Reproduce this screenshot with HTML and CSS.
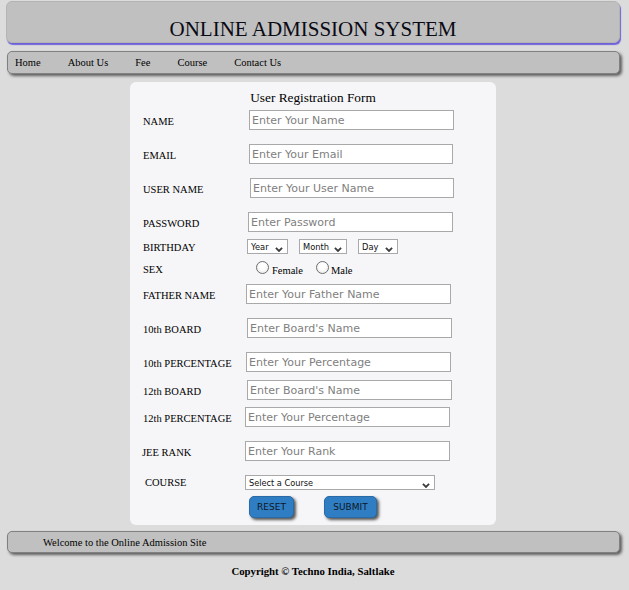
FILE: index.html
```html
<!DOCTYPE html>
<html lang="en">
<head>
<meta charset="utf-8">
<title>Online Admission System</title>
<link rel="stylesheet" href="styles.css">
</head>
<body>
<div class="page">
  <header class="masthead"><h1 class="masthead-title">ONLINE ADMISSION SYSTEM</h1></header>
  <nav class="menu">
    <a href="#">Home</a>
    <a href="#">About Us</a>
    <a href="#">Fee</a>
    <a href="#">Course</a>
    <a href="#">Contact Us</a>
  </nav>
  <main class="card">
    <form class="reg">
      <div class="form-title">User Registration Form</div>

      <div class="row">
        <label class="lbl">NAME</label>
        <input class="field off4" type="text" placeholder="Enter Your Name">
      </div>
      <div class="row gap-14">
        <label class="lbl">EMAIL</label>
        <input class="field off4 w204" type="text" placeholder="Enter Your Email">
      </div>
      <div class="row gap-14">
        <label class="lbl">USER NAME</label>
        <input class="field off5 w204" type="text" placeholder="Enter Your User Name">
      </div>
      <div class="row gap-14">
        <label class="lbl">PASSWORD</label>
        <input class="field off3" type="password" placeholder="Enter Password">
      </div>

      <div class="row row-sm gap-7">
        <label class="lbl">BIRTHDAY</label>
        <div class="dob off2">
          <span class="select-wrap sw-year">
            <select class="sel"><option>Year</option></select>
            <svg class="chev" width="8" height="5" viewBox="0 0 8 5"><path d="M0.9 0.9 L4 4 L7.1 0.9" fill="none" stroke="#3c3c3c" stroke-width="1.8"/></svg>
          </span>
          <span class="select-wrap sw-month">
            <select class="sel"><option>Month</option></select>
            <svg class="chev" width="8" height="5" viewBox="0 0 8 5"><path d="M0.9 0.9 L4 4 L7.1 0.9" fill="none" stroke="#3c3c3c" stroke-width="1.8"/></svg>
          </span>
          <span class="select-wrap sw-day">
            <select class="sel"><option>Day</option></select>
            <svg class="chev" width="8" height="5" viewBox="0 0 8 5"><path d="M0.9 0.9 L4 4 L7.1 0.9" fill="none" stroke="#3c3c3c" stroke-width="1.8"/></svg>
          </span>
        </div>
      </div>

      <div class="row row-sex gap-7">
        <label class="lbl">SEX</label>
        <div class="radios">
          <input class="radio" type="radio" name="sex" id="female"><label class="rtext" for="female">Female</label>
          <input class="radio r2" type="radio" name="sex" id="male"><label class="rtext rt2" for="male">Male</label>
        </div>
      </div>

      <div class="row gap-9">
        <label class="lbl">FATHER NAME</label>
        <input class="field off1" type="text" placeholder="Enter Your Father Name">
      </div>
      <div class="row gap-14">
        <label class="lbl">10th BOARD</label>
        <input class="field off2" type="text" placeholder="Enter Board's Name">
      </div>
      <div class="row gap-14">
        <label class="lbl">10th PERCENTAGE</label>
        <input class="field off1" type="text" placeholder="Enter Your Percentage">
      </div>
      <div class="row gap-8">
        <label class="lbl">12th BOARD</label>
        <input class="field off2" type="text" placeholder="Enter Board's Name">
      </div>
      <div class="row gap-7">
        <label class="lbl">12th PERCENTAGE</label>
        <input class="field" type="text" placeholder="Enter Your Percentage">
      </div>
      <div class="row gap-14">
        <label class="lbl lbl-l">JEE RANK</label>
        <input class="field" type="text" placeholder="Enter Your Rank">
      </div>

      <div class="row row-sm gap-14">
        <label class="lbl lbl-r">COURSE</label>
        <span class="select-wrap sw-course">
          <select class="sel sel-course"><option>Select a Course</option></select>
          <svg class="chev" width="8" height="5" viewBox="0 0 8 5"><path d="M0.9 0.9 L4 4 L7.1 0.9" fill="none" stroke="#3c3c3c" stroke-width="1.8"/></svg>
        </span>
      </div>

      <div class="actions">
        <button class="btn btn-reset" type="reset">RESET</button>
        <button class="btn btn-submit" type="submit">SUBMIT</button>
      </div>
    </form>
  </main>
  <div class="ticker">Welcome to the Online Admission Site</div>
  <p class="copy">Copyright © Techno India, Saltlake</p>
</div>
</body>
</html>
```

FILE: styles.css
```css
* { box-sizing: border-box; }

html, body {
  margin: 0;
  padding: 0;
  background: #dcdcdc;
}

body {
  font-family: "Liberation Serif", "Times New Roman", serif;
  color: #000;
}

.page {
  display: flex;
  flex-direction: column;
  padding: 1px 9px 0 6px;
  width: 629px;
  min-height: 590px;
}

.masthead {
  height: 42px;
  background: #c0c0c0;
  border: 1px solid #b4b4b4;
  border-radius: 6px;
  box-shadow: 1px 2px 1px #6f62d8;
  padding-top: 15px;
  text-align: center;
}

.masthead-title {
  margin: 0;
  font-weight: normal;
  font-size: 21px;
  line-height: 24px;
  color: #0a0a14;
}

.menu {
  margin-top: 8px;
  margin-left: 1px;
  height: 23px;
  background: #c0c0c0;
  border: 1px solid #808080;
  border-radius: 5px;
  box-shadow: 2px 2px 3px #5e5e5e;
  display: flex;
  align-items: center;
  gap: 27px;
  padding-left: 7px;
}

.menu a {
  color: #000;
  text-decoration: none;
  font-size: 10.5px;
}

.card {
  margin: 8px auto 0;
  width: 366px;
  background: #f6f6f8;
  border-radius: 6px;
  padding: 8px 13px 7px;
}

.reg {
  display: flex;
  flex-direction: column;
  margin: 0;
}

.form-title {
  text-align: center;
  font-size: 13.3px;
  line-height: 16px;
  margin-bottom: 4px;
}

.row {
  display: flex;
  align-items: center;
  height: 20px;
}

.row-sm { height: 15px; }
.row-sex { height: 14px; }

.gap-14 { margin-top: 14px; }
.gap-9 { margin-top: 9px; }
.gap-8 { margin-top: 8px; }
.gap-7 { margin-top: 7px; }

.lbl {
  width: 102px;
  flex: none;
  font-size: 10.5px;
  padding-top: 2px;
  white-space: nowrap;
}

.lbl-l { margin-left: -1px; width: 103px; }
.lbl-r { padding-left: 2px; padding-top: 0; }

.field {
  width: 205px;
  height: 20px;
  border: 1px solid #a9a9a9;
  background: #fff;
  padding: 0 2px;
  margin: 0;
  font-family: "DejaVu Sans", sans-serif;
  font-size: 11px;
  color: #333;
  outline: none;
}

.field::placeholder { color: #808080; }

.w204 { width: 204px; }
.off1 { margin-left: 1px; }
.off2 { margin-left: 2px; }
.off3 { margin-left: 3px; }
.off4 { margin-left: 4px; }
.off5 { margin-left: 5px; }

.dob {
  display: flex;
  gap: 11px;
  height: 15px;
}

.select-wrap {
  position: relative;
  display: block;
  height: 15px;
}

.sw-year { width: 41px; }
.sw-month { width: 48px; }
.sw-day { width: 40px; }
.sw-course { width: 190px; }

.sel {
  appearance: none;
  -webkit-appearance: none;
  display: block;
  width: 100%;
  height: 15px;
  margin: 0;
  border: 1px solid #a9a9a9;
  border-radius: 0;
  background: #fff;
  padding: 0 0 0 3px;
  font-family: "DejaVu Sans", sans-serif;
  font-size: 8.3px;
  color: #111;
  outline: none;
}

.sel-course {
  font-size: 8.2px;
  padding-left: 3px;
}

.chev {
  position: absolute;
  right: 5px;
  bottom: 2px;
  pointer-events: none;
}

.radios {
  display: flex;
  align-items: center;
  margin-left: 11px;
}

.radio {
  appearance: none;
  -webkit-appearance: none;
  width: 13px;
  height: 13px;
  margin: 0 0 1px 0;
  border: 1px solid #6e6e6e;
  border-radius: 50%;
  background: radial-gradient(circle at 50% 40%, #ffffff 35%, #e2e2e2 100%);
}

.rtext {
  font-size: 10.5px;
  padding-top: 5px;
  margin-left: 3px;
}

.r2 { margin-left: 13px; }
.rt2 { margin-left: 2px; }

.actions {
  display: flex;
  gap: 30px;
  margin-top: 6px;
  padding-left: 106px;
}

.btn {
  height: 22px;
  margin: 0;
  padding: 0;
  background: #2f7ec3;
  border: 1px solid #2a6aa6;
  border-radius: 5px;
  box-shadow: 2px 2px 3px #555;
  font-family: "DejaVu Sans", sans-serif;
  font-size: 9px;
  color: #0e1626;
}

.btn-reset { width: 45px; }
.btn-submit { width: 53px; }

.ticker {
  margin-top: 6px;
  margin-left: 1px;
  height: 22px;
  background: #c0c0c0;
  border: 1px solid #808080;
  border-radius: 5px;
  box-shadow: 2px 2px 3px #5e5e5e;
  display: flex;
  align-items: center;
  padding-left: 35px;
  font-size: 10.5px;
}

.copy {
  margin: 12px 0 0;
  text-align: center;
  font-weight: bold;
  font-size: 10.75px;
  line-height: 12px;
}
```
